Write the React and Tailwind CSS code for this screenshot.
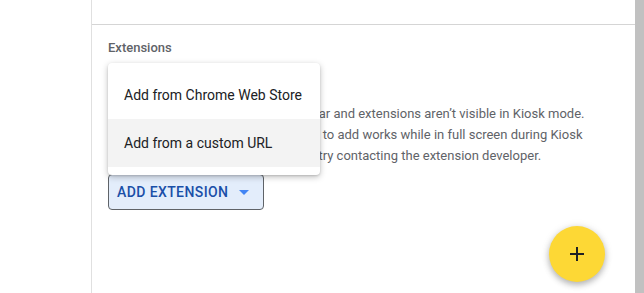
import React from "react";

export default function App() {
  return (
    <div className="flex h-[293px] w-[644px] overflow-hidden bg-white font-['Roboto',sans-serif]">
      <div className="w-[92px] shrink-0 border-r border-[#e0e0e0]" />
      <main className="relative flex min-w-0 flex-1 flex-col">
        <div className="h-[25px] shrink-0 border-b border-[#d5d5d5]" />
        <section className="relative px-4 pt-[15px]">
          <h3 className="text-[13px] leading-4 font-medium text-[#5f6368]">Extensions</h3>
          <p className="mt-[47px] text-[13px] leading-[21px] text-[#5f6368]">
            Notice: Your Chrome browser’s toolbar and extensions aren’t visible in Kiosk mode.
            <br />
            Ensure that each extension you want to add works while in full screen during Kiosk
            <br />
            mode. If the extension doesn't work, try contacting the extension developer.
          </p>
          <button className="mt-[8px] inline-flex h-[36px] items-center rounded-[4px] border border-[#5f6368] bg-[#e3edfb] pr-[7px] pl-2 text-[14px] font-medium tracking-[0.4px] text-[#1a4fa8]">
            ADD EXTENSION
            <svg viewBox="0 0 24 24" className="ml-1 h-6 w-6 fill-[#4285f4]">
              <path d="M7 10l5 5 5-5z" />
            </svg>
          </button>

          <div className="absolute top-[38px] left-4 w-[212px] rounded-[4px] bg-white py-2 shadow-[0_2px_6px_rgba(0,0,0,0.25),0_1px_2px_rgba(0,0,0,0.12)]">
            <div className="flex h-12 items-center px-4 text-[14px] text-[#202124]">Add from Chrome Web Store</div>
            <div className="flex h-12 items-center bg-[#f3f3f3] px-4 text-[14px] text-[#202124]">Add from a custom URL</div>
          </div>
        </section>

        <button className="absolute right-[30px] bottom-[11px] flex h-14 w-14 items-center justify-center rounded-full bg-[#fdd835] shadow-[0_3px_6px_rgba(0,0,0,0.25),0_1px_10px_rgba(0,0,0,0.1)]">
          <svg viewBox="0 0 24 24" className="h-6 w-6 fill-[#202124]">
            <path d="M19 13h-6v6h-2v-6H5v-2h6V5h2v6h6v2z" />
          </svg>
        </button>
      </main>
      <div className="w-[9px] shrink-0 bg-[#c1c1c1]" />
    </div>
  );
}
